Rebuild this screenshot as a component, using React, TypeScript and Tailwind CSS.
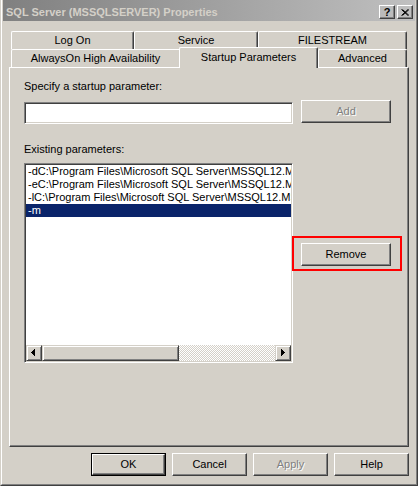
import React from 'react';

const params = [
  '-dC:\\Program Files\\Microsoft SQL Server\\MSSQL12.MSSQLSERVER\\MSSQL\\DATA\\master.mdf',
  '-eC:\\Program Files\\Microsoft SQL Server\\MSSQL12.MSSQLSERVER\\MSSQL\\Log\\ERRORLOG',
  '-lC:\\Program Files\\Microsoft SQL Server\\MSSQL12.MSSQLSERVER\\MSSQL\\DATA\\mastlog.ldf',
  '-m',
];

// classic 3D edges
const raised =
  'border border-t-white border-l-white border-r-[#404040] border-b-[#404040] shadow-[inset_-1px_-1px_0_#808080]';
const sunken =
  'border border-t-[#808080] border-l-[#808080] border-r-white border-b-white shadow-[inset_1px_1px_0_#404040,inset_-1px_-1px_0_#d4d0c8]';
const scrollPart =
  'border border-t-[#d4d0c8] border-l-[#d4d0c8] border-r-[#404040] border-b-[#404040] shadow-[inset_1px_1px_0_#ffffff,inset_-1px_-1px_0_#808080]';
const tabEdge =
  'border-t border-l border-r border-t-white border-l-white border-r-[#404040] rounded-t-[2px] shadow-[inset_-1px_0_0_#808080]';

function Tab({ label, className }: { label: string; className: string }) {
  return <div className={`flex h-[18px] items-center justify-center ${tabEdge} ${className}`}>{label}</div>;
}

function Button({ label, disabled, isDefault, className }: { label: string; disabled?: boolean; isDefault?: boolean; className: string }) {
  const face = (
    <div
      className={`flex h-full w-full items-center justify-center ${raised} ${
        disabled ? 'text-[#808080] [text-shadow:1px_1px_0_#ffffff]' : 'text-black'
      }`}
    >
      {label}
    </div>
  );
  if (isDefault) {
    return <div className={`border border-black ${className}`}>{face}</div>;
  }
  return <div className={className}>{face}</div>;
}

function Arrow({ dir }: { dir: 'left' | 'right' }) {
  const cols = dir === 'left' ? [5, 6, 7, 8] : [6, 7, 8, 9];
  const heights = dir === 'left' ? [1, 3, 5, 7] : [7, 5, 3, 1];
  return (
    <svg width="14" height="14" viewBox="0 0 14 14" shapeRendering="crispEdges">
      {cols.map((x, i) => (
        <rect key={x} x={x - 1} y={7.5 - heights[i] / 2 - 1} width="1" height={heights[i]} fill="#000" />
      ))}
    </svg>
  );
}

export default function App() {
  return (
    <div className="h-[486px] w-[418px] border-b border-l border-r border-b-[#404040] border-l-[#d4d0c8] border-r-[#404040] bg-[#d4d0c8] font-['Liberation_Sans',Arial,sans-serif] text-[11px] leading-[13px] text-black">
      <div className="flex h-full flex-col border-b border-l border-r border-b-[#808080] border-l-white border-r-[#808080] px-px">
        {/* title bar */}
        <div className="flex h-[21px] items-center bg-gradient-to-r from-[#808080] to-[#c0c0c0] pt-[3px]">
          <span className="flex-1 pl-[3px] text-[11px] font-bold text-[#d4d0c8]">SQL Server (MSSQLSERVER) Properties</span>
          <div className={`flex h-[14px] w-[16px] items-center justify-center text-[11px] font-bold leading-none ${raised}`}>?</div>
          <div className={`ml-[2px] mr-[2px] flex h-[14px] w-[16px] items-center justify-center ${raised}`}>
            <svg width="8" height="7" viewBox="0 0 8 7">
              <path d="M0.5 0.5 L7 6.5 M1.5 0.5 L8 6.5 M7 0.5 L0.5 6.5 M8 0.5 L1.5 6.5" stroke="#000" strokeWidth="1" />
            </svg>
          </div>
        </div>

        {/* tabs */}
        <div className="mx-[6px] mt-[10px]">
          <div className="flex h-[18px] pl-[2px]">
            <Tab label="Log On" className="w-[123px]" />
            <Tab label="Service" className="w-[124px]" />
            <Tab label="FILESTREAM" className="w-[149px]" />
          </div>
          <div className="flex h-[18px] pl-[2px]">
            <div className="flex h-[18px] w-[168px] items-center justify-center rounded-tl-[2px] border-l border-t border-l-white border-t-white">
              AlwaysOn High Availability
            </div>
            <div className={`relative z-10 -mt-[2px] flex h-[21px] w-[139px] justify-center bg-[#d4d0c8] pt-[3px] ${tabEdge}`}>
              Startup Parameters
            </div>
            <Tab label="Advanced" className="w-[89px]" />
          </div>
        </div>

        {/* panel */}
        <div className="mx-[6px] flex h-[380px] flex-col border border-b-[#404040] border-l-white border-r-[#404040] border-t-white pl-[14px] pt-[12px] shadow-[inset_-1px_-1px_0_#808080]">
          <div>Specify a startup parameter:</div>
          <div className="mt-[7px] flex items-start">
            <div className={`mt-[2px] h-[22px] w-[269px] bg-white ${sunken}`} />
            <Button label="Add" disabled className="ml-[8px] h-[23px] w-[90px]" />
          </div>

          <div className="mt-[19px]">Existing parameters:</div>
          <div className="mt-[7px] flex items-start">
            <div className={`flex h-[200px] w-[269px] flex-col bg-white p-px ${sunken}`}>
              <div className="flex-1 overflow-hidden">
                {params.map((p, i) => (
                  <div
                    key={p}
                    className={`h-[13px] overflow-hidden whitespace-nowrap pl-[2px] ${
                      i === 3 ? 'bg-[#0a246a] text-white' : ''
                    }`}
                  >
                    {p}
                  </div>
                ))}
              </div>
              <div className="flex h-[16px]">
                <div className={`flex h-[16px] w-[16px] items-center justify-center bg-[#d4d0c8] ${scrollPart}`}>
                  <Arrow dir="left" />
                </div>
                <div className={`h-[16px] w-[137px] bg-[#d4d0c8] ${scrollPart}`} />
                <div className="h-[16px] flex-1 bg-[image:repeating-conic-gradient(#d4d0c8_0%_25%,#ffffff_0%_50%)] bg-[length:2px_2px]" />
                <div className={`flex h-[16px] w-[16px] items-center justify-center bg-[#d4d0c8] ${scrollPart}`}>
                  <Arrow dir="right" />
                </div>
              </div>
            </div>

            <div className="ml-[8px] pt-[80px]">
              <div className="relative">
                <Button label="Remove" className="h-[23px] w-[90px]" />
                <div className="absolute -bottom-[5px] -left-[9px] -right-[11px] -top-[7px] border-2 border-[#ff0000]" />
              </div>
            </div>
          </div>
        </div>

        {/* dialog buttons */}
        <div className="mr-[6px] mt-[6px] flex justify-end gap-[6px]">
          <Button label="OK" isDefault className="h-[23px] w-[75px]" />
          <Button label="Cancel" className="h-[23px] w-[75px]" />
          <Button label="Apply" disabled className="h-[23px] w-[75px]" />
          <Button label="Help" className="h-[23px] w-[75px]" />
        </div>
      </div>
    </div>
  );
}
